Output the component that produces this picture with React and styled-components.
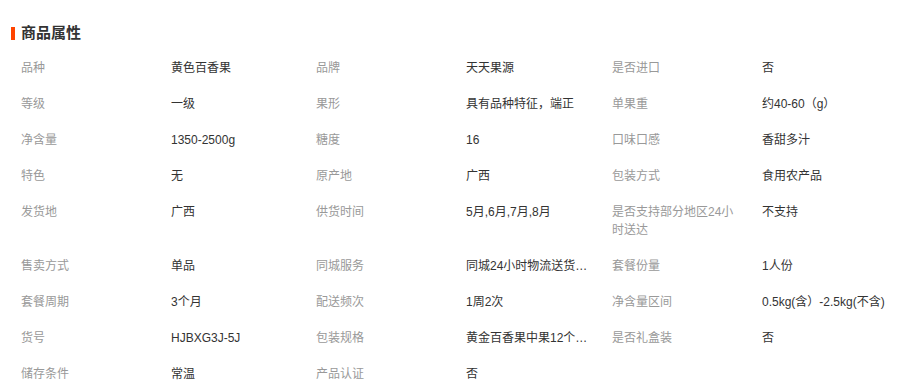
import React from "react";
import styled, { createGlobalStyle } from "styled-components";

const GlobalStyle = createGlobalStyle`
  body {
    margin: 0;
    background: #fff;
    font-family: "Liberation Sans", "Noto Sans CJK SC", sans-serif;
  }
`;

const Panel = styled.section`
  width: 905px;
  padding-left: 11px;
  box-sizing: border-box;
`;

const Title = styled.h3`
  display: flex;
  align-items: center;
  margin: 0 0 7px;
  padding-top: 23px;
  height: 20px;
  line-height: 20px;
  font-size: 15px;
  font-weight: bold;
  color: #333;
  box-sizing: content-box;
`;

const Bar = styled.span`
  display: inline-block;
  width: 4px;
  height: 13px;
  margin-right: 6px;
  background: #ff4400;
`;

const Grid = styled.div`
  display: grid;
  grid-template-columns: 150px 145px 150px 146px 150px 1fr;
  margin-left: 10px;
`;

const Cell = styled.div`
  box-sizing: border-box;
  padding: 9px ${(p) => (p.$label ? "25px" : "23px")} 9px 0;
  font-size: 12px;
  line-height: 18px;
  color: ${(p) => (p.$label ? "#999" : "#333")};
  ${(p) =>
    !p.$label &&
    `
    white-space: nowrap;
    overflow: hidden;
    text-overflow: ellipsis;
  `}

  &:nth-child(6n) {
    padding-right: 0;
    overflow: visible;
  }
`;

const attrs = [
  ["品种", "黄色百香果"],
  ["品牌", "天天果源"],
  ["是否进口", "否"],
  ["等级", "一级"],
  ["果形", "具有品种特征，端正"],
  ["单果重", "约40-60（g）"],
  ["净含量", "1350-2500g"],
  ["糖度", "16"],
  ["口味口感", "香甜多汁"],
  ["特色", "无"],
  ["原产地", "广西"],
  ["包装方式", "食用农产品"],
  ["发货地", "广西"],
  ["供货时间", "5月,6月,7月,8月"],
  ["是否支持部分地区24小时送达", "不支持"],
  ["售卖方式", "单品"],
  ["同城服务", "同城24小时物流送货上门"],
  ["套餐份量", "1人份"],
  ["套餐周期", "3个月"],
  ["配送频次", "1周2次"],
  ["净含量区间", "0.5kg(含）-2.5kg(不含)"],
  ["货号", "HJBXG3J-5J"],
  ["包装规格", "黄金百香果中果12个/盒"],
  ["是否礼盒装", "否"],
  ["储存条件", "常温"],
  ["产品认证", "否"],
];

export default function App() {
  return (
    <>
      <GlobalStyle />
      <Panel>
        <Title>
          <Bar />
          商品属性
        </Title>
        <Grid>
          {attrs.map(([k, v]) => (
            <React.Fragment key={k}>
              <Cell $label>{k}</Cell>
              <Cell title={v}>{v}</Cell>
            </React.Fragment>
          ))}
        </Grid>
      </Panel>
    </>
  );
}
